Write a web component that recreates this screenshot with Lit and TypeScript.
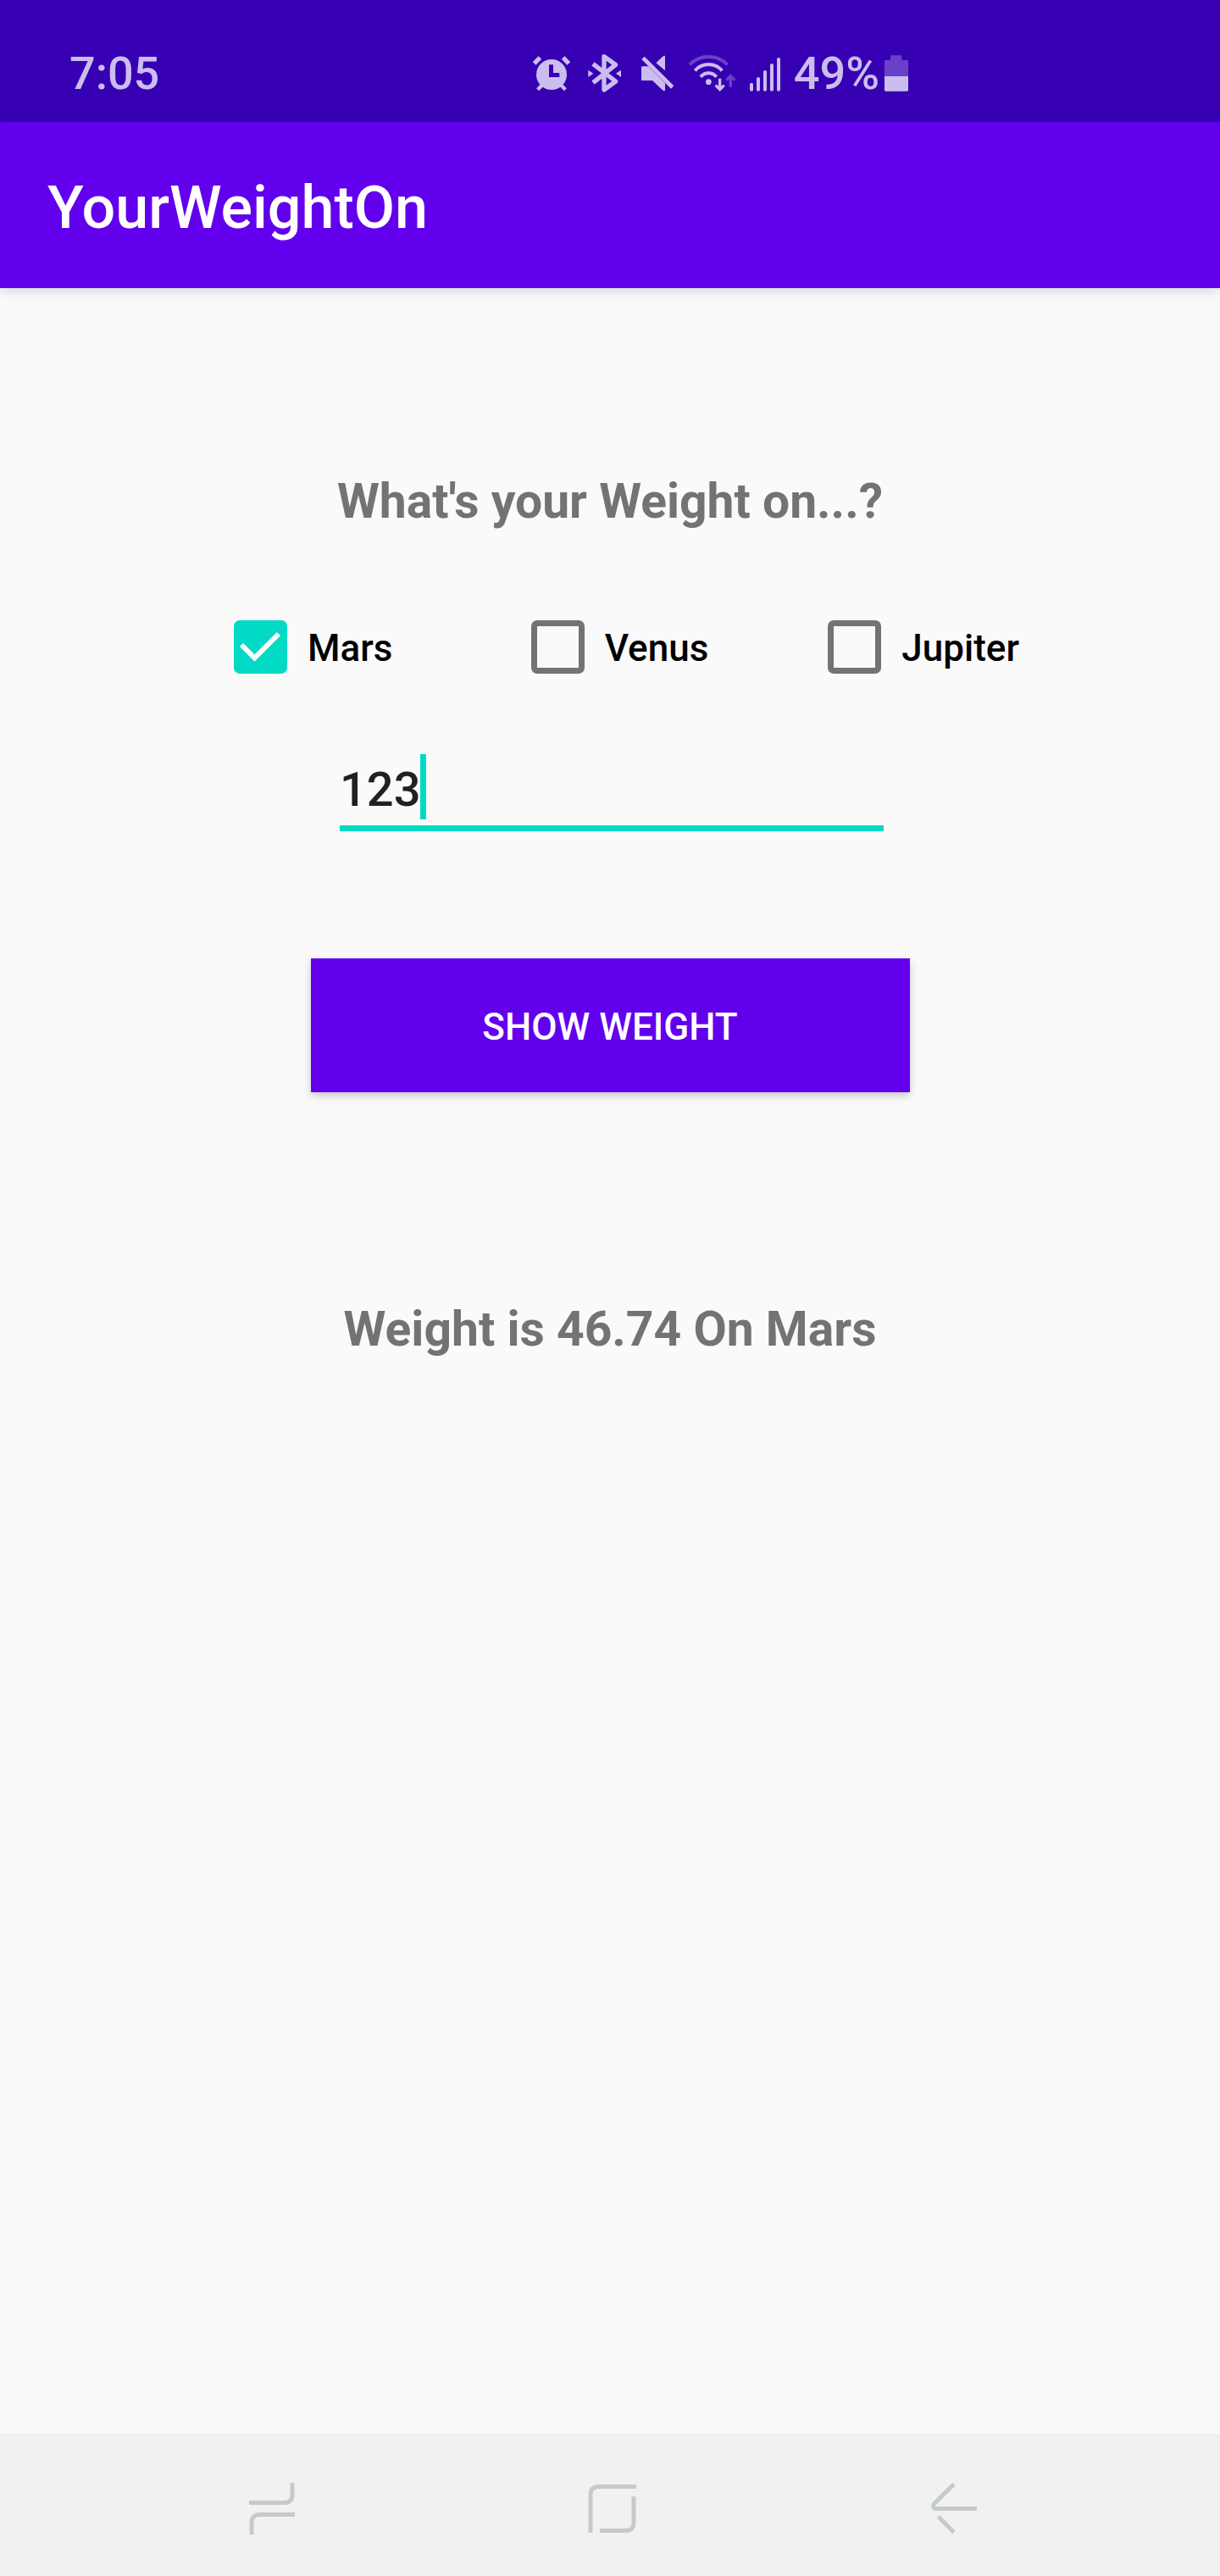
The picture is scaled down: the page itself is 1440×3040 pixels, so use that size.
import { LitElement, html, css, svg } from "lit";
import { customElement, state } from "lit/decorators.js";

interface Planet {
  name: string;
  gravity: number;
}

const PLANETS: Planet[] = [
  { name: "Mars", gravity: 0.38 },
  { name: "Venus", gravity: 0.91 },
  { name: "Jupiter", gravity: 2.34 },
];

@customElement("status-bar")
export class StatusBar extends LitElement {
  static styles = css`
    :host {
      display: flex;
      align-items: center;
      justify-content: space-between;
      box-sizing: border-box;
      height: 144px;
      padding: 30px 368px 0 82px;
      background: #3700b3;
      color: #cbbdee;
      font-size: 54px;
      font-weight: 500;
      line-height: 64px;
    }
    .icons {
      display: flex;
      align-items: center;
      gap: 16px;
    }
    .battery {
      display: flex;
      align-items: center;
      gap: 6px;
    }
    svg {
      display: block;
      height: 48px;
      flex: none;
      fill: #cbbdee;
      stroke: none;
    }
    .line {
      fill: none;
      stroke: #cbbdee;
    }
    .dim {
      fill: #6b40c8;
    }
    .line-dim {
      fill: none;
      stroke: #6b40c8;
    }
    .cut {
      fill: #3700b3;
    }
  `;

  render() {
    return html`
      <time>7:05</time>
      <div class="icons">
        <svg width="48" viewBox="0 0 144 144" aria-hidden="true">
          <circle cx="69" cy="75" r="54" />
          <g class="line">
            <path d="M8 36L28 15M130 36L110 15" stroke-width="16" />
            <path d="M36 112L20 128M102 112L118 128" stroke-width="13" />
          </g>
          <path class="cut" d="M60 40h15v29h22v15H60z" />
        </svg>
        <svg width="44" viewBox="0 0 132 144" aria-hidden="true">
          <path
            class="line"
            d="M24 37L104 99L63 129V11L104 40L24 104"
            stroke-width="16"
            stroke-linejoin="round"
          />
          <path d="M7 59L25 71L7 84zM123 59L105 71L123 84z" />
        </svg>
        <svg width="44" viewBox="0 0 132 144" aria-hidden="true">
          <path class="line" d="M21 16L125 120" stroke-width="14" />
          <path d="M15 50Q15 46 19 46H40L99 105V133Q93 133 89 129L54 96H19Q15 96 15 92z" />
          <path d="M99 8Q94 8 90 12L67 34L99 61z" />
        </svg>
        <svg width="57" viewBox="0 0 171 144" aria-hidden="true">
          <path class="line-dim" d="M6 40A94 94 0 0 1 140 40" stroke-width="12" />
          <path
            class="line"
            d="M25 61A64 64 0 0 1 121 61M45 83A36 36 0 0 1 101 83"
            stroke-width="12"
          />
          <circle cx="73" cy="101" r="10" />
          <path class="line" d="M113 89V128M98 113L113 128L128 113" stroke-width="10" />
          <path class="line-dim" d="M151 119V80M136 95L151 80L166 95" stroke-width="10" />
        </svg>
        <svg width="36" viewBox="0 0 108 144" aria-hidden="true">
          ${[104, 84, 60, 36, 15].map(
            (top, i) =>
              svg`<rect x=${i * 24} y=${top} width="12" height=${134 - top} rx="6" />`
          )}
        </svg>
        <div class="battery">
          <span>49%</span>
          <svg width="28" viewBox="0 0 84 144" aria-hidden="true">
            <path
              class="dim"
              d="M25 7H57Q61 7 61 11V24H80Q84 24 84 28V81H0V28Q0 24 4 24H21V11Q21 7 25 7z"
            />
            <path d="M0 81H84V130Q84 134 80 134H4Q0 134 0 130z" />
          </svg>
        </div>
      </div>
    `;
  }
}

@customElement("nav-bar")
export class NavBar extends LitElement {
  static styles = css`
    :host {
      display: block;
      background: #f1f1f1;
    }
    .bar {
      display: flex;
      height: 168px;
      box-sizing: border-box;
      padding: 8px 113px 0 120px;
    }
    button {
      flex: 1;
      display: flex;
      align-items: center;
      justify-content: center;
      padding: 0;
      border: 0;
      background: none;
    }
    svg {
      display: block;
      fill: none;
      stroke: #c5cacb;
      stroke-width: 5;
    }
  `;

  render() {
    return html`
      <nav class="bar">
        <button aria-label="Recent apps">
          <svg width="64" height="64" viewBox="0 0 64 64">
            <path d="M5 25.5H47Q56 25 56 16V2M59 39.5H17Q8 40 8 49V63" />
          </svg>
        </button>
        <button aria-label="Home">
          <svg width="64" height="64" viewBox="0 0 64 64">
            <path d="M60 6.5H15Q6 7 6 16V61M17 58.5H48Q57 58 57 49V18" />
          </svg>
        </button>
        <button aria-label="Back">
          <svg width="64" height="64" viewBox="0 0 64 64">
            <path d="M32 3.5L8.500 27Q7 29 8 31Q9 32.500 11 32.500H59M13.500 42L32 60.500" />
          </svg>
        </button>
      </nav>
    `;
  }
}

@customElement("app-root")
export class AppRoot extends LitElement {
  @state() private planet = "Mars";
  @state() private weight = "123";
  @state() private result = "Weight is 46.74 On Mars";

  static styles = css`
    :host {
      display: flex;
      flex-direction: column;
      min-height: 100vh;
      background: #fafafa;
      font-family: Roboto, "Liberation Sans", sans-serif;
    }
    .app-bar {
      display: flex;
      align-items: center;
      box-sizing: border-box;
      height: 196px;
      padding: 6px 56px 0;
      background: #6200ee;
      box-shadow: 0 3px 14px rgba(0, 0, 0, 0.15);
      color: #fff;
    }
    .title {
      margin: 0;
      font-size: 70px;
      font-weight: 500;
      line-height: 84px;
    }
    .content {
      flex: 1;
      display: flex;
      flex-direction: column;
      align-items: center;
      padding-top: 220px;
    }
    .message {
      margin: 0;
      color: #737373;
      font-size: 57px;
      font-weight: 700;
      line-height: 64px;
      text-align: center;
    }
    .planets {
      align-self: stretch;
      display: grid;
      grid-template-columns: repeat(3, 1fr);
      margin: 108px 0 95px;
      padding: 0 112px 0 276px;
    }
    .planet {
      display: flex;
      align-items: center;
      gap: 24px;
      color: #000;
      font-size: 44px;
      font-weight: 500;
      line-height: 60px;
    }
    .name {
      padding-top: 3px;
    }
    .check {
      appearance: none;
      flex: none;
      display: grid;
      width: 63px;
      height: 63px;
      box-sizing: border-box;
      margin: 0;
      border: 7px solid #737373;
      border-radius: 7px;
    }
    .check:checked {
      border-color: #03dac5;
      background: #03dac5;
    }
    .box {
      display: grid;
    }
    .box > * {
      grid-area: 1 / 1;
    }
    .tick {
      width: 63px;
      height: 63px;
      fill: none;
      stroke: #fafafa;
      stroke-width: 6;
      pointer-events: none;
    }
    .field {
      position: relative;
      box-sizing: border-box;
      width: 646px;
      max-width: 100%;
      padding-left: 4px;
    }
    .weight {
      display: block;
      width: 100%;
      height: 91px;
      box-sizing: border-box;
      padding: 0;
      border: 0;
      border-bottom: 7px solid #03dac5;
      border-radius: 0;
      outline: 0;
      background: none;
      color: #212121;
      font-family: inherit;
      font-size: 56px;
      font-weight: 500;
      caret-color: transparent;
    }
    .caret {
      position: absolute;
      top: 0;
      left: 99px;
      width: 7px;
      height: 77px;
      background: #03dac5;
    }
    .show {
      width: 707px;
      max-width: 100%;
      height: 158px;
      margin: 150px 0 248px;
      padding: 4px 0 0;
      border: 0;
      background: #6200ee;
      box-shadow: 0 4px 10px rgba(0, 0, 0, 0.2);
      color: #fff;
      font-family: inherit;
      font-size: 44px;
      font-weight: 500;
    }
  `;

  private showWeight() {
    const planet = PLANETS.find((p) => p.name === this.planet);
    if (planet) {
      const value = Number(this.weight) * planet.gravity;
      this.result = `Weight is ${value.toFixed(2)} On ${planet.name}`;
    }
  }

  render() {
    return html`
      <status-bar></status-bar>
      <header class="app-bar"><h1 class="title">YourWeightOn</h1></header>
      <main class="content">
        <p class="message">What's your Weight on...?</p>
        <div class="planets">
          ${PLANETS.map(
            ({ name }) => html`
              <label class="planet">
                <span class="box">
                  <input
                    class="check"
                    type="checkbox"
                    .checked=${this.planet === name}
                    @change=${() => (this.planet = name)}
                  />
                  ${this.planet === name
                    ? html`<svg class="tick" viewBox="0 0 63 63" aria-hidden="true">
                        <path d="M9 29L24.500 44.500L53 16" />
                      </svg>`
                    : null}
                </span>
                <span class="name">${name}</span>
              </label>
            `
          )}
        </div>
        <div class="field">
          <input
            class="weight"
            type="text"
            inputmode="decimal"
            aria-label="Weight"
            .value=${this.weight}
            @input=${(e: Event) => (this.weight = (e.target as HTMLInputElement).value)}
          />
          <span class="caret"></span>
        </div>
        <button class="show" @click=${this.showWeight}>SHOW WEIGHT</button>
        <p class="message" role="status">${this.result}</p>
      </main>
      <nav-bar></nav-bar>
    `;
  }
}
